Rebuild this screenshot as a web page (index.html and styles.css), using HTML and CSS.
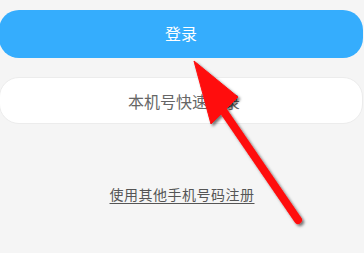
FILE: index.html
```html
<!DOCTYPE html>
<html lang="zh">
<head>
<meta charset="utf-8">
<link rel="stylesheet" href="styles.css">
</head>
<body>
<div class="page">
  <div class="btn btn-primary">登录</div>
  <div class="btn btn-secondary">本机号快速登录</div>
  <div class="link-row"><a class="link">使用其他手机号码注册</a></div>
</div>
<svg class="arrow" width="364" height="253" viewBox="0 0 364 253">
  <defs>
    <filter id="sh" x="-20%" y="-20%" width="140%" height="140%">
      <feDropShadow dx="2" dy="2" stdDeviation="1.6" flood-color="#000" flood-opacity="0.55"/>
    </filter>
  </defs>
  <g filter="url(#sh)" fill="#ff0a0a" stroke="#ff0a0a">
    <line x1="220" y1="106" x2="298" y2="220" stroke-width="8" stroke-linecap="round"/>
    <polygon points="194,61 238,97 211,124" stroke-width="1" stroke-linejoin="round"/>
  </g>
</svg>
</body>
</html>
```

FILE: styles.css
```css
html, body {
  margin: 0;
  padding: 0;
  background: #f5f5f5;
  width: 364px;
  height: 253px;
  overflow: hidden;
  font-family: "Noto Sans CJK SC", "Noto Sans", sans-serif;
}

.page {
  display: flex;
  flex-direction: column;
  padding-top: 10px;
}

.btn {
  display: flex;
  align-items: center;
  justify-content: center;
  height: 48px;
  margin: 0 1px 0 -1px;
  border-radius: 20px;
  font-size: 16px;
  box-sizing: border-box;
}

.btn-primary {
  background: #35adfd;
  color: #ffffff;
  padding-bottom: 2px;
}

.btn-secondary {
  margin-top: 19px;
  height: 47px;
  background: #ffffff;
  border: 1px solid #ececec;
  color: #666666;
  padding-left: 6px;
}

.link-row {
  display: flex;
  justify-content: center;
  margin-top: 60px;
}

.link {
  font-size: 14px;
  color: #555555;
  text-decoration: underline;
  text-underline-offset: 3px;
  letter-spacing: 0.5px;
}

.arrow {
  position: absolute;
  left: 0;
  top: 0;
  pointer-events: none;
}
```
